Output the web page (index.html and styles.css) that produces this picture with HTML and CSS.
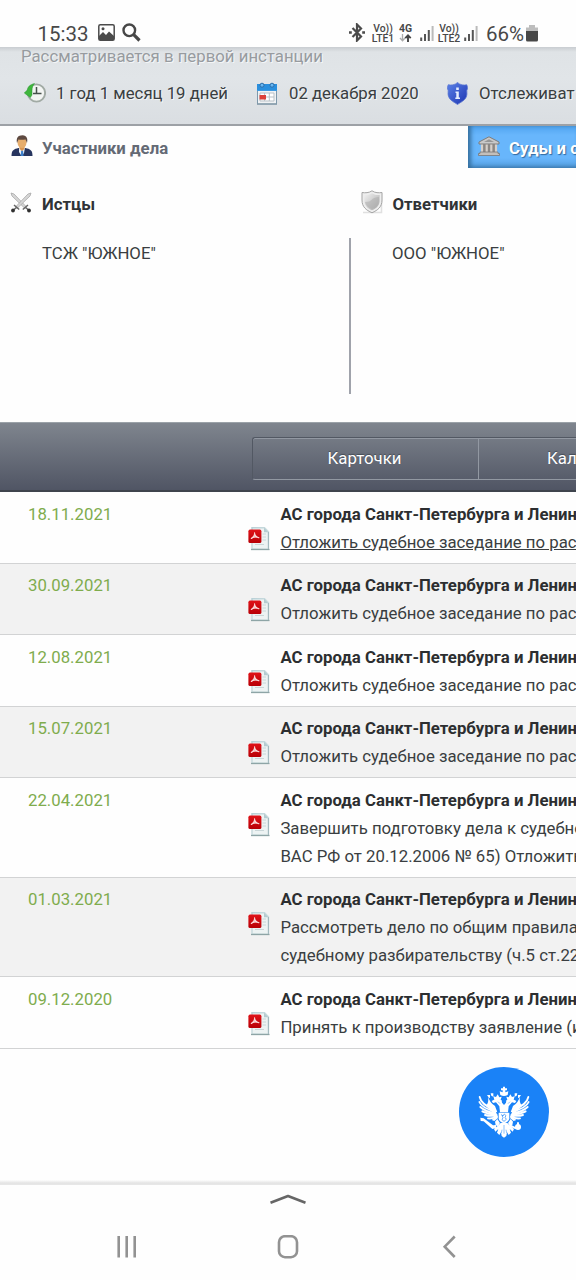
FILE: index.html
```html
<!DOCTYPE html>
<html lang="ru">
<head>
<meta charset="utf-8">
<title>Картотека дел</title>
<link rel="stylesheet" href="styles.css">
</head>
<body>
<svg class="defs" width="0" height="0" aria-hidden="true">
  <defs>
    <linearGradient id="paper" x1="0" y1="0" x2="1" y2="1"><stop offset="0" stop-color="#b9d0d6"/><stop offset="1" stop-color="#dde8e8"/></linearGradient>
    <linearGradient id="red" x1="0" y1="0" x2="0" y2="1"><stop offset="0" stop-color="#e01218"/><stop offset="1" stop-color="#b80006"/></linearGradient>
    <linearGradient id="blue" x1="0" y1="0" x2="1" y2="1"><stop offset="0" stop-color="#5b82e8"/><stop offset="1" stop-color="#1c34b0"/></linearGradient>
    <linearGradient id="steel" x1="0" y1="0" x2="1" y2="1"><stop offset="0" stop-color="#f2f2f2"/><stop offset="1" stop-color="#a9a9a9"/></linearGradient>
    <symbol id="pdf" viewBox="0 0 22 24">
      <path d="M4 .8H16.5L20.5 4.8V22H4Z" fill="#edf3f3" stroke="url(#paper)" stroke-width="1.5"/>
      <path d="M3 22.5H21.5" stroke="#8ea5a6" stroke-width="1.3"/>
      <path d="M20.4 5V22" stroke="#9db5ba"/>
      <path d="M16 .8V5.3H20.5Z" fill="#b4cbd0"/>
      <path d="M14.5 7H18M14.5 10H18M14.5 13H18M7 17.5H16" stroke="#c9d6d8"/>
      <rect x=".4" y="2.6" width="13" height="13.4" rx="1.6" fill="url(#red)"/>
      <path d="M6.5 5.800C7.200 7.800 5.700 9.600 3.300 11.500 5 10.300 8.500 9.600 10.900 10.800 8.500 10 6.700 8.500 6.500 5.800Z" fill="#f5b5b5" stroke="#fbdada" stroke-width="1.100" stroke-linejoin="round"/>
    </symbol>
    <symbol id="signal" viewBox="0 0 14 16">
      <path d="M1.200 16V12.500M5 16V9M8.800 16V5" stroke="#555" stroke-width="2"/>
      <path d="M12.600 16V1" stroke="#bbb" stroke-width="2"/>
    </symbol>
  </defs>
</svg>

<header class="status">
  <span class="clock">15:33</span>
  <svg class="st-pic" viewBox="0 0 17 17"><rect x=".8" y=".8" width="15.400" height="15.400" rx="1.500" fill="none" stroke="#4b4b4b" stroke-width="1.500"/><path d="M1 12 5 8 8 11 11 7.500 16 12V16H1Z" fill="#4b4b4b"/><circle cx="5" cy="4.800" r="1.500" fill="#4b4b4b"/></svg>
  <svg class="st-find" viewBox="0 0 19 19"><circle cx="7.300" cy="7.300" r="5.800" fill="none" stroke="#474747" stroke-width="2.400"/><path d="M11.700 11.700 17.500 17.500" stroke="#474747" stroke-width="3.200"/></svg>
  <svg class="st-bt" viewBox="0 0 16 19"><path d="M3.500 5 12 13.500 8 17.500V1.500L12 5.500 3.500 14" fill="none" stroke="#4b4b4b" stroke-width="2.200"/><path d="M0 9.500H2.800M13.200 9.500H16" stroke="#4b4b4b" stroke-width="2.600"/></svg>
  <span class="lte"><span>Vo))</span><span>LTE1</span></span>
  <span class="net"><span>4G</span>
    <svg viewBox="0 0 13 8"><path d="M3.500 0V6M1 4 3.500 6.800 6 4" fill="none" stroke="#aaa" stroke-width="1.300"/><path d="M9 8V2M6.300 4.200 9 1.400 11.700 4.200" fill="none" stroke="#444" stroke-width="1.900"/></svg>
  </span>
  <svg class="st-sig"><use href="#signal"/></svg>
  <span class="lte lte2"><span>Vo))</span><span>LTE2</span></span>
  <svg class="st-sig"><use href="#signal"/></svg>
  <span class="battery-text">66%</span>
  <svg class="st-bat" viewBox="0 0 12 17"><path d="M0 6V2.500H3V0H9V2.500H12V6Z" fill="#bdbdbd"/><path d="M0 6H12V15Q12 16.500 10.500 16.500H1.500Q0 16.500 0 15Z" fill="#474747"/></svg>
</header>

<section class="case">
  <div class="case-state">Рассматривается в первой инстанции</div>
  <div class="case-facts">
    <svg class="i-clock" viewBox="0 0 22 22"><circle cx="12.500" cy="11" r="8.600" fill="#f3f5f3" stroke="#a1aaa4" stroke-width="1.900"/><path d="M12.500 5V11.500H17.500M9 11.500H12" fill="none" stroke="#46514b" stroke-width="1.500"/><path d="M10.500 1.500C5.500 2.800 3.800 5 3.300 8L.3 11 6.300 15.500 8 13V8.500C8 5.300 9 3.500 10.500 1.500Z" fill="#3fb63c" stroke="#279331" stroke-width=".5"/></svg>
    <span class="f-time">1 год 1 месяц 19 дней</span>
    <svg class="i-cal" viewBox="0 0 22 23"><rect x="1.500" y="2.500" width="19" height="19.500" fill="#f0f2f4" stroke="#7d98ab"/><path d="M1 2H21V9H1Z" fill="#2a8fdd"/><path d="M1 8.500H21" stroke="#3f9be2"/><circle cx="6" cy="3.200" r="2" fill="#69b8f3" stroke="#2d6da9"/><circle cx="16" cy="3.200" r="2" fill="#69b8f3" stroke="#2d6da9"/><path d="M4 11H18V19H4ZM8.600 11V19M13.300 11V19M4 15H18" fill="#fff" stroke="#b9c1c7"/><rect x="3.500" y="13" width="6.500" height="4.500" fill="#dc4039"/><path d="M1 22H21" stroke="#8499a8" stroke-width="1.300"/></svg>
    <span class="f-date">02 декабря 2020</span>
    <svg class="i-info" viewBox="0 0 21 23"><path d="M10.500.5C8 3 4 3.500 1.300 2.700.7 4 .2 5 .6 7 2 9 .3 11 1.500 14.500 3 18.500 7 20 10.500 22.500 14 20 18 18.500 19.500 14.500 20.700 11 19 9 20.400 7 20.800 5 20.300 4 19.700 2.700 17 3.500 13 3 10.500.5Z" fill="url(#blue)" stroke="#5a76d2" stroke-width=".8"/><path d="M9.200 5.500H11.800V8H9.200ZM8.500 9.500H11.800V15.500H13V17H8.300V15.500H9.300V11H8.500Z" fill="#e4edff"/></svg>
    <span class="f-track">Отслеживат</span>
  </div>
</section>

<section class="parties">
  <div class="tabs">
    <div class="tab-on">
      <svg class="i-man" viewBox="0 0 22 22"><path d="M.5 21C.5 15 3 14 7.500 13H14.500C19 14 21.500 15 21.500 21Z" fill="#27355f"/><path d="M8 12.500H14L13 18 11 21H10.500L8 17Z" fill="#e8f0f8"/><path d="M10.200 15.500H12L12.500 21H9.700Z" fill="#3b80cd"/><path d="M8.500 10H13.500V14L11 16 8.500 14Z" fill="#d99652"/><ellipse cx="11" cy="7.500" rx="4.500" ry="5.500" fill="#e6ad6c"/><path d="M6 8C5 3 7 .3 11.500.3 16 .5 17 4 16 8L14.500 4.500Q10 5 7.500 4.500Z" fill="#5e4940"/></svg>
      <span>Участники дела</span>
    </div>
    <div class="tab-off">
      <svg class="i-court" viewBox="0 0 22 20"><path d="M11 .8 21 6V8H1V6Z" fill="#c9c9c9" stroke="#7c7c7c"/><path d="M6 6 11 3.300 16 6Z" fill="#969696"/><path d="M3 8H19V17H3Z" fill="#8b8784"/><path d="M4 8.500V16M8.700 8.500V16M13.300 8.500V16M18 8.500V16" stroke="#d6d0ca" stroke-width="2.200"/><path d="M2 16H20V17.500H21.500V19.500H.5V17.500H2Z" fill="#c3bfbb" stroke="#777" stroke-width=".8"/></svg>
      <span>Суды и с</span>
    </div>
  </div>
  <div class="sides">
    <div class="side plaintiff">
      <h2><svg class="i-swords" viewBox="0 0 22 22"><g id="sword"><path d="M1 1 4 2 16.500 15 15 16.500 2 4Z" fill="#d6d6d6" stroke="#a8a8a8" stroke-width=".8"/><path d="M12.800 17.500 18 13M15 15 18.500 18" stroke="#666" stroke-width="1.500"/><circle cx="19" cy="18.500" r="1.900" fill="#303030"/></g><use href="#sword" transform="matrix(-1 0 0 1 22 0)"/></svg><span>Истцы</span></h2>
      <p>ТСЖ "ЮЖНОЕ"</p>
    </div>
    <div class="side defendant">
      <h2><svg class="i-shield" viewBox="0 0 22 24"><path d="M2 22.500H20.500V3" fill="none" stroke="#e0e0e0" stroke-width="1.500"/><path d="M11 .8C8 3 4 3 1 2.500V10C1 17 5 20 11 22.800 17 20 21 17 21 10V2.500C18 3 14 3 11 .8Z" fill="#eee" stroke="#a5a5a5"/><path d="M11 3.300C8.500 5 6 5.200 3.300 5V10C3.300 15.500 6 18 11 20.300 16 18 18.700 15.500 18.700 10V5C16 5.200 13.500 5 11 3.300Z" fill="url(#steel)"/><path d="M4 12Q9 12 11 9.500T18 7V10Q18 17 11 19 5 17 4 12Z" fill="#aaa" opacity=".5"/></svg><span>Ответчики</span></h2>
      <p>ООО "ЮЖНОЕ"</p>
    </div>
  </div>
</section>

<nav class="bar">
  <div class="group">
    <span class="btn">Карточки</span>
    <span class="btn second">Кал</span>
  </div>
</nav>

<main class="log">
  <article class="row"><time>18.11.2021</time><svg class="i-pdf"><use href="#pdf"/></svg><div class="text"><b>АС города Санкт-Петербурга и Ленин</b><span class="link">Отложить судебное заседание по рас</span></div></article>
  <article class="row"><time>30.09.2021</time><svg class="i-pdf"><use href="#pdf"/></svg><div class="text"><b>АС города Санкт-Петербурга и Ленин</b><span>Отложить судебное заседание по рас</span></div></article>
  <article class="row"><time>12.08.2021</time><svg class="i-pdf"><use href="#pdf"/></svg><div class="text"><b>АС города Санкт-Петербурга и Ленин</b><span>Отложить судебное заседание по рас</span></div></article>
  <article class="row"><time>15.07.2021</time><svg class="i-pdf"><use href="#pdf"/></svg><div class="text"><b>АС города Санкт-Петербурга и Ленин</b><span>Отложить судебное заседание по рас</span></div></article>
  <article class="row"><time>22.04.2021</time><svg class="i-pdf"><use href="#pdf"/></svg><div class="text"><b>АС города Санкт-Петербурга и Ленин</b><span>Завершить подготовку дела к судебно</span><span>ВАС РФ от 20.12.2006 № 65) Отложить</span></div></article>
  <article class="row"><time>01.03.2021</time><svg class="i-pdf"><use href="#pdf"/></svg><div class="text"><b>АС города Санкт-Петербурга и Ленин</b><span>Рассмотреть дело по общим правила</span><span>судебному разбирательству (ч.5 ст.22</span></div></article>
  <article class="row"><time>09.12.2020</time><svg class="i-pdf"><use href="#pdf"/></svg><div class="text"><b>АС города Санкт-Петербурга и Ленин</b><span>Принять к производству заявление (и</span></div></article>
</main>

<div class="emblem">
  <svg viewBox="55 50 270 270">
    <circle cx="190" cy="185" r="135" fill="#1a82f7"/>
    <g id="half" fill="#fff">
      <path d="M117 140Q121 163 164 180M116 155Q124 173 164 184M119 170Q134 184 164 188M125 183Q142 192 166 191M133 194Q150 199 168 194M142 204Q156 206 169 198" fill="none" stroke="#fff" stroke-width="5.500" stroke-linecap="round"/>
      <path d="M142 138Q147 158 163 167L170 186 150 182 136 165Q145 160 142 138Z"/>
      <path d="M153 209 169 195 172 203 161 212Z"/>
      <path d="M153 152 164 146Q178 144 183 150L184 157 190 164V186H178L176 168 166 156 157 158Z"/>
      <path d="M161 148 158 138 166 140 171 132 176 141 183 139 180 148Z"/>
      <path d="M139 134H148V144L143 140ZM150 129H158V139L152 136Z"/>
      <path d="M174 187H190V219Q178 216 174 206Z"/>
      <path d="M170 206 163 214 165 225 172 228 178 218Z"/>
      <path d="M180 218H190V262L183 257 181 246 176 254 169 247 173 236 164 244 160 236 170 228Z"/>
    </g>
    <use href="#half" transform="matrix(-1 0 0 1 380 0)"/>
    <path d="M179 134 177 123 186 126V120H181V114H187V109H193V114H199V120H194V126L203 123 201 134Q190 140 179 134Z" fill="#fff"/>
    <path d="M119 202 129 204 157 225 166 224 167 233 155 236 129 213 120 212Z" fill="#fff"/>
    <circle cx="232" cy="230" r="9" fill="#fff"/><path d="M232 216V226M207 225 226 234" stroke="#fff" stroke-width="6"/>
    <path d="M183 193 187 197 191 191 196 196 193 201 197 207 190 213 184 208 187 202Z" fill="none" stroke="#1a82f7" stroke-width="2"/>
    <path d="M190 224V250M184 238 182 248M196 238 198 248M178 160 172 154M202 160 208 154" stroke="#1a82f7" stroke-width="1.500"/>
  </svg>
</div>

<footer class="nav">
  <svg class="up" viewBox="0 0 38 12"><path d="M1.500 9.800 19 3 36.500 9.800" fill="none" stroke="#666" stroke-width="2.600" stroke-linejoin="round"/></svg>
  <div class="keys">
    <svg viewBox="0 0 24 24"><path d="M3.700 1V22.500M11.700 1V22.500M19.700 1V22.500" stroke="#929292" stroke-width="2.600"/></svg>
    <svg viewBox="0 0 24 24"><rect x="3" y="1.200" width="18" height="21" rx="6" fill="none" stroke="#929292" stroke-width="2.600"/></svg>
    <svg viewBox="0 0 24 24"><path d="M17.700 1.500 7.700 11.700 17.700 22" fill="none" stroke="#929292" stroke-width="2.600"/></svg>
  </div>
</footer>
</body>
</html>
```
FILE: styles.css
```css
* { box-sizing: border-box; }
body {
  margin: 0;
  width: 576px;
  height: 1280px;
  overflow: hidden;
  display: flex;
  flex-direction: column;
  background: #fefefe;
  color: #3a3e41;
  font: 16.78px/28px Roboto, "Noto Sans", sans-serif;
  white-space: nowrap;
}
svg { display: block; flex: none; }
.defs { position: absolute; }

.status {
  flex: none;
  height: 47px;
  padding: 22px 0 0 37.5px;
  display: flex;
  align-items: flex-start;
  color: #484848;
}
.clock { width: 60px; font-size: 20.5px; line-height: 24px; }
.st-pic { width: 17px; height: 17px; margin-top: 2px; }
.st-find { width: 19px; height: 19px; margin: 1px 208.5px 0 7px; }
.st-bt { width: 16px; height: 19px; margin: 1px 7px 0 0; }
.lte { display: flex; flex-direction: column; align-items: center; width: 22px; margin-top: 2px; font-size: 10.4px; line-height: 9.8px; font-weight: 500; }
.lte2 { margin: 2px 4px 0 4px; }
.net { width: 14px; margin: 2px 7px 0 5px; font-size: 10.4px; line-height: 9.8px; font-weight: 700; }
.net span { display: block; }
.net svg { width: 13px; height: 8px; }
.st-sig { width: 14px; height: 16px; margin-top: 3px; }
.battery-text { width: 38px; margin-left: 8px; font-size: 20.5px; line-height: 24px; }
.st-bat { width: 12px; height: 17px; margin: 3px 0 0 2px; }

.case {
  flex: none;
  height: 79px;
  padding-left: 21px;
  overflow: hidden;
  background: linear-gradient(#c9cdd1, #dfe3e6 5px, #e1e5e8 40%, #dadee2);
  border-bottom: 2px solid #9da1a6;
}
.case-state { height: 18px; line-height: 19px; font-size: 16.8px; color: #979b9f; text-shadow: 1px 1px #f4f6f7; }
.case-facts { display: flex; align-items: center; height: 56px; text-shadow: 1px 1px #f4f6f7; }
.case-facts span { line-height: 28px; }
.i-clock { width: 22px; height: 22px; margin: 0 10px 0 3px; }
.f-time { width: 200px; }
.i-cal { width: 22px; height: 23px; margin-right: 11px; }
.f-date { width: 158px; }
.i-info { width: 21px; height: 23px; margin-right: 11px; }

.parties { flex: none; height: 296px; }
.tabs { display: flex; height: 42px; font-weight: 700; }
.tab-on { display: flex; flex: none; width: 468px; padding: 8px 0 0 11px; color: #646a75; }
.i-man { width: 22px; height: 22px; margin: 1px 9px 0 0; }
.tab-off {
  display: flex;
  flex: none;
  width: 108px;
  overflow: hidden;
  padding: 8px 0 0 10px;
  color: #fff;
  text-shadow: 1px 1px 1px #33689d;
  background: linear-gradient(#50a4f0, #68b6fc 9px, #68b6fc 32px, #559ee0);
  box-shadow: inset 3px -1px 4px #356f9e;
}
.i-court { width: 22px; height: 20px; margin: 2px 9px 0 0; }
.tabs span { line-height: 28px; }
.sides { display: flex; }
.side { flex: none; padding-left: 10px; }
.side h2 { display: flex; margin: 22px 0 0; font-size: inherit; color: #303336; }
.side p { margin: 21px 0 0 32px; }
.defendant p { margin-left: 31px; }
.i-swords { width: 22px; height: 22px; margin: 2px 10px 0 0; }
.i-shield { width: 22px; height: 24px; margin: 0 9.5px 0 0; }
.plaintiff {
  width: 351px;
  height: 226px;
  background: linear-gradient(#a0a3ab, #a0a3ab) 349px 70px / 2px 156px no-repeat;
}

.bar {
  flex: none;
  height: 70px;
  padding: 14px 0 0 252px;
  overflow: hidden;
  border-top: 1px solid #9ba2a8;
  border-bottom: 2px solid #3f444d;
  background: linear-gradient(#7f858e, #505564);
}
.group {
  display: flex;
  width: 324px;
  height: 43px;
  border: 1px solid #525863;
  border-right: 0;
  border-bottom-color: #9298a2;
  border-radius: 3px 0 0 3px;
  box-shadow: inset 0 1px #9298a2;
  color: #fff;
  line-height: 41px;
  text-shadow: 0 -1px 1px #444b55;
}
.btn { flex: none; width: 226px; padding-right: 2px; text-align: center; border-right: 1px solid #9298a2; }
.second { width: 97px; text-align: left; padding-left: 68px; border: 0; }

.log { flex: none; height: 557px; overflow: hidden; }
.row {
  display: flex;
  padding: 7.5px 0 7px 28px;
  border-bottom: 1px solid #d2d3d4;
}
.row:nth-child(even) { background: #f2f2f2; }
.row time { flex: none; width: 220px; color: #7fac4d; }
.i-pdf { width: 22px; height: 24px; margin: 27px 10.4px 0 0; }
.text { flex: none; display: flex; flex-direction: column; }
.text b { color: #2c2e30; }
.link { text-decoration: underline; }

.emblem { flex: none; height: 136px; padding: 18px 0 0 458.5px; background: linear-gradient(transparent 131px, #e4e4e4 134px, #e8e8e8); }
.emblem svg { width: 90px; height: 90px; }

.nav { flex: 1; padding-top: 8px; }
.up { width: 38px; height: 12px; margin: 0 auto; }
.keys { display: flex; justify-content: space-between; padding: 30px 115px 0; }
.keys svg { width: 24px; height: 24px; }
```
